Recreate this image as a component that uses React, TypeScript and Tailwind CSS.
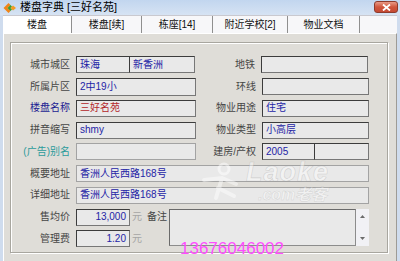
import React from 'react';

const font = "font-['Liberation_Sans','Noto_Sans_CJK_SC',sans-serif]";

const tabs = [
  { label: '楼盘', w: 'w-[69px]' },
  { label: '楼盘[续]', w: 'w-[70px]' },
  { label: '栋座[14]', w: 'w-[71px]' },
  { label: '附近学校[2]', w: 'w-[75px]' },
  { label: '物业文档', w: 'w-[72px]' },
];

type BoxProps = {
  w: string;
  h?: string;
  dim?: boolean;
  right?: boolean;
  color?: string;
  className?: string;
  children?: React.ReactNode;
};

const Box: React.FC<BoxProps> = ({ w, h = 'h-[17px]', dim, right, color = 'text-[#2424a6]', className = '', children }) => (
  <div
    className={`${w} ${h} ${color} ${className} shrink-0 flex items-center bg-[#e9e9e9] border text-[10px] leading-none overflow-hidden whitespace-nowrap ${
      dim
        ? 'border-[#a3a3a3]'
        : 'border-[#777] border-t-[#3c3c3c] border-l-[#3c3c3c]'
    } ${right ? 'justify-end pr-[3px]' : 'pl-[3px]'}`}
  >
    {children}
  </div>
);

const Label: React.FC<{ w: string; color?: string; children: React.ReactNode }> = ({ w, color = 'text-[#454545]', children }) => (
  <div className={`${w} ${color} shrink-0 text-right text-[10px] leading-none whitespace-nowrap`}>{children}</div>
);

const Row: React.FC<{ children: React.ReactNode }> = ({ children }) => (
  <div className="flex items-center h-[21.75px]">{children}</div>
);

export default function App() {
  return (
    <div className={`${font} relative w-[400px] h-[261px] overflow-hidden bg-[#cfdcee] select-none`}>
      {/* title bar */}
      <div className="h-[15px] flex items-center bg-gradient-to-b from-[#c2d6ef] to-[#d6e3f3] relative">
        <svg width="14" height="12" viewBox="0 0 14 12" className="ml-[3px]">
          <path d="M0.5 6 L5.5 1 L7.5 3 L4.5 6 L7.5 9 L5.5 11 Z" fill="#f08419" />
          <path d="M4.5 6 L7.5 3 L9 4.5 L7.5 6 L9 7.5 L7.5 9 Z" fill="#3d9c2e" />
          <path d="M7.5 6 L10 3.5 L13 6 L10 8.5 Z" fill="#f39a23" />
        </svg>
        <span className="ml-[3px] text-[11px] leading-none text-black">楼盘字典 [三好名苑]</span>
        <div className="absolute right-[2px] top-[1px] w-[24px] h-[12px] rounded-[3px] border border-[#8e3b2c] bg-gradient-to-b from-[#e89a87] via-[#d0563d] to-[#c54a33] flex items-center justify-center">
          <svg width="9" height="7" viewBox="0 0 9 7">
            <path d="M1 0.5 L8 6.5 M8 0.5 L1 6.5" stroke="#fff" strokeWidth="1.8" />
          </svg>
        </div>
      </div>

      <div className="ml-[3px] w-[394px] h-[246px] flex flex-col">
        {/* tab strip */}
        <div className="h-[18px] flex bg-[#f7f7f9] border-t border-[#c9c9cf]">
          {tabs.map((t, i) => (
            <div
              key={t.label}
              className={`${t.w} h-full flex items-center justify-center text-[10px] leading-none text-[#111] border-r border-[#8f8f8f] ${
                i === 0 ? 'bg-white' : ''
              }`}
            >
              {t.label}
            </div>
          ))}
          <div className="flex-1" />
        </div>

        {/* panel */}
        <div className="flex-1 bg-[#dfddd8] border-t border-l border-white border-r border-r-[#9d9b96] pl-[6px] pt-[8px]">
          <div className="relative w-[378px] h-[211px] border border-[#a8a69f] shadow-[inset_1px_1px_0_#fff,1px_1px_0_#fff] pt-[11px]">
            <Row>
              <Label w="w-[59px]">城市城区</Label>
              <div className="ml-[6px] flex">
                <Box w="w-[54px]">珠海</Box>
                <Box w="w-[66px]" className="-ml-px">新香洲</Box>
              </div>
              <Label w="w-[60px]">地铁</Label>
              <div className="ml-[6px]"><Box w="w-[107px]" /></div>
            </Row>
            <Row>
              <Label w="w-[59px]">所属片区</Label>
              <div className="ml-[6px]"><Box w="w-[120px]" h="h-[18px]">2中19小</Box></div>
              <Label w="w-[60px]">环线</Label>
              <div className="ml-[6px]"><Box w="w-[107px]" /></div>
            </Row>
            <Row>
              <Label w="w-[59px]" color="text-[#1c1c92]">楼盘名称</Label>
              <div className="ml-[6px]"><Box w="w-[120px]" color="text-[#b3262a]">三好名苑</Box></div>
              <Label w="w-[60px]">物业用途</Label>
              <div className="ml-[6px]"><Box w="w-[107px]">住宅</Box></div>
            </Row>
            <Row>
              <Label w="w-[59px]">拼音缩写</Label>
              <div className="ml-[6px]"><Box w="w-[120px]">shmy</Box></div>
              <Label w="w-[60px]">物业类型</Label>
              <div className="ml-[6px]"><Box w="w-[107px]">小高层</Box></div>
            </Row>
            <Row>
              <Label w="w-[59px]" color="text-[#2c9b9b]">(广告)别名</Label>
              <div className="ml-[6px]"><Box w="w-[120px]" dim /></div>
              <Label w="w-[60px]">建房/产权</Label>
              <div className="ml-[6px] flex">
                <Box w="w-[53px]">2005</Box>
                <Box w="w-[55px]" className="-ml-px" />
              </div>
            </Row>
            <Row>
              <Label w="w-[59px]">概要地址</Label>
              <div className="ml-[6px]"><Box w="w-[293px]" dim>香洲人民西路168号</Box></div>
            </Row>
            <Row>
              <Label w="w-[59px]">详细地址</Label>
              <div className="ml-[6px]"><Box w="w-[293px]" dim>香洲人民西路168号</Box></div>
            </Row>

            {/* price / fee / remarks */}
            <div className="flex items-start">
              <div className="flex flex-col">
                <Row>
                  <Label w="w-[59px]">售均价</Label>
                  <div className="ml-[6px]"><Box w="w-[54px]" right>13,000</Box></div>
                  <span className="ml-[2px] text-[10px] leading-none text-[#a5a5a5]">元</span>
                </Row>
                <Row>
                  <Label w="w-[59px]">管理费</Label>
                  <div className="ml-[6px]"><Box w="w-[54px]" right>1.20</Box></div>
                  <span className="ml-[2px] text-[10px] leading-none text-[#a5a5a5]">元</span>
                </Row>
              </div>
              <div className="h-[21.75px] flex items-center ml-[5px]">
                <span className="text-[10px] leading-none text-[#454545]">备注</span>
              </div>
              <div className="ml-[2px] mt-[3px] flex h-[37px]">
                <div className="w-[187px] h-full bg-[#e9e9e9] border border-[#8c8c8c] border-t-[#6a6a6a] border-l-[#6a6a6a]" />
                <div className="w-[13px] h-full bg-[#f1f1f5] flex flex-col items-center justify-between py-[6px]">
                  <svg width="5" height="3" viewBox="0 0 5 3"><path d="M0 3 L2.5 0 L5 3 Z" fill="#6b6b6b" /></svg>
                  <svg width="5" height="3" viewBox="0 0 5 3"><path d="M0 0 L2.5 3 L5 0 Z" fill="#6b6b6b" /></svg>
                </div>
              </div>
            </div>
          </div>
        </div>
      </div>

      {/* watermark */}
      <div className="absolute left-[246px] top-[161px] text-[27px] leading-[22px] italic font-bold text-white/45 tracking-[1px] [-webkit-text-stroke:0.6px_rgba(150,150,150,0.35)]">
        Laoke
      </div>
      <div className="absolute left-[258px] top-[187px] text-[16px] leading-[16px] italic font-bold text-white/40 [-webkit-text-stroke:0.5px_rgba(150,150,150,0.3)]">
        .com老客
      </div>
      <svg className="absolute left-[200px] top-[162px]" width="42" height="40" viewBox="0 0 42 40">
        <circle cx="24" cy="7" r="5" fill="none" stroke="rgba(255,255,255,0.5)" strokeWidth="3" />
        <path d="M4 18 L22 16 L36 22 M22 16 L16 36 M18 26 L34 34" fill="none" stroke="rgba(255,255,255,0.45)" strokeWidth="4" strokeLinecap="round" />
      </svg>

      {/* phone overlay */}
      <div className="absolute left-[180px] top-[240px] text-[17px] leading-[17px] text-[#ff4dff] font-['Liberation_Sans',sans-serif]">
        13676046002
      </div>
    </div>
  );
}
